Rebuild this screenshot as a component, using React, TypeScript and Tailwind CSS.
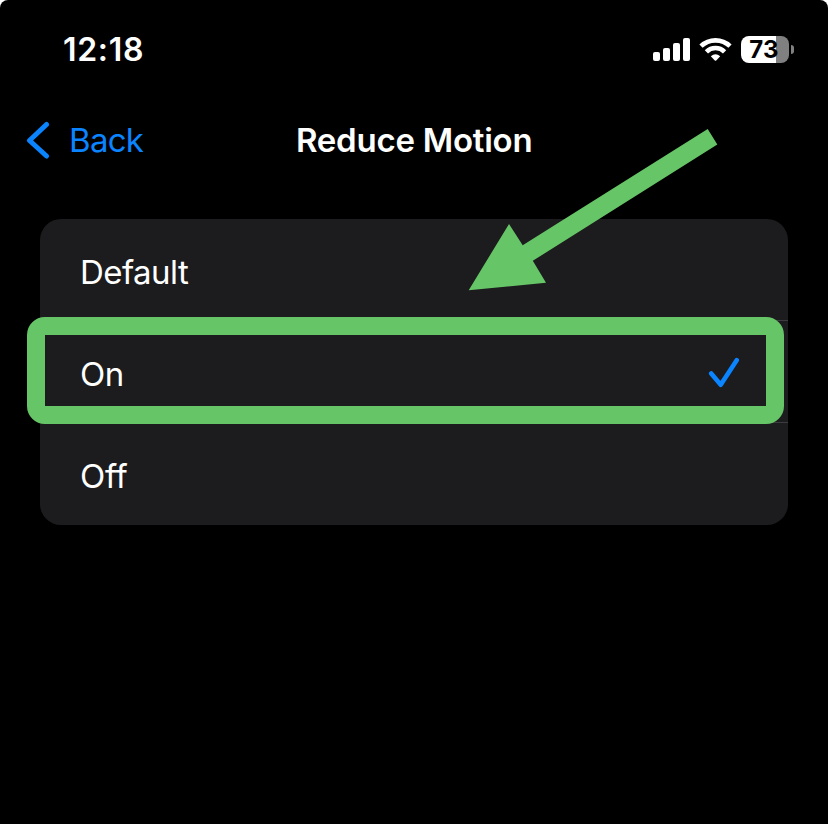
const options = [
  { label: "Default", selected: false, tracking: "tracking-[-0.55px]" },
  { label: "On", selected: true, tracking: "tracking-[-0.4px]" },
  { label: "Off", selected: false, tracking: "tracking-[-0.3px]" },
];

function SignalIcon() {
  return (
    <svg width="37" height="24" viewBox="0 0 37 24" fill="white" className="ml-[653px] shrink-0">
      <rect x="0" y="14" width="7" height="9" rx="2" />
      <rect x="10" y="10" width="7" height="13" rx="2" />
      <rect x="20" y="5" width="7" height="18" rx="2" />
      <rect x="30" y="0" width="7" height="23" rx="2" />
    </svg>
  );
}

function WifiIcon() {
  return (
    <svg width="33" height="24" viewBox="0 0 33 24" fill="none" className="ml-[9px] shrink-0">
      <path d="M2 8.2C10 .4 23 .4 31 8.2" stroke="white" strokeWidth="4.6" />
      <path d="M7.4 13.8C12.4 8.8 20.6 8.8 25.6 13.8" stroke="white" strokeWidth="4.6" />
      <path d="M11.8 18.3Q16.5 14.2 21.2 18.3L17.2 22.5Q16.5 23.2 15.8 22.5Z" fill="white" />
    </svg>
  );
}

function Battery() {
  return (
    <div className="mb-[2px] ml-[9px] flex items-center gap-[2px]">
      <div className="flex h-[27px] w-[48px] items-center justify-center rounded-[8px] bg-[linear-gradient(to_right,#fff_73%,#808080_73%)] pt-px pr-[2px] text-[24px] leading-none font-bold tracking-[0.1px] text-black">
        73
      </div>
      <div className="h-[9px] w-[3px] rounded-r-full bg-[#808080]" />
    </div>
  );
}

export default function App() {
  return (
    <div className="h-[824px] w-[828px] bg-white">
      <div className="relative h-full overflow-hidden rounded-t-[8px] bg-black font-[Inter,sans-serif] text-white">
        <header className="grid h-[100px] items-center">
          <div className="col-start-1 row-start-1 pl-[63px] text-[32px] leading-10 font-semibold tracking-[0.7px]">
            12:18
          </div>
          <div className="col-start-1 row-start-1 flex items-center">
            <SignalIcon />
            <WifiIcon />
            <Battery />
          </div>
        </header>

        <nav className="grid h-[80px] grid-cols-[296px_1fr] items-center">
          <div className="flex items-center pl-[26px] text-[#0a84ff]">
            <svg width="24" height="38" viewBox="0 0 24 38" fill="none" stroke="currentColor" strokeWidth="5" strokeLinecap="round" strokeLinejoin="round">
              <path d="M20.5 3.5 3.5 19.5l17 15.5" />
            </svg>
            <span className="ml-[19px] text-[33px] leading-10 tracking-[-0.7px]">Back</span>
          </div>
          <h1 className="text-[33px] leading-10 font-semibold tracking-[-0.25px] whitespace-nowrap">Reduce Motion</h1>
        </nav>

        <ul className="mx-10 mt-[39px] h-[306px] overflow-hidden rounded-[21px] bg-[#1c1c1e]">
          {options.map((option, i) => (
            <li key={option.label} className="h-[102px] pl-10">
              <div className={`flex h-full items-center justify-between border-b pt-[5px] pr-[48px] ${i < 2 ? "border-[#3d3d41]" : "border-transparent"}`}>
                <span className={`text-[33px] leading-10 ${option.tracking}`}>{option.label}</span>
                {option.selected && (
                  <svg width="32" height="32" viewBox="0 0 32 32" fill="none" stroke="#0a84ff" strokeWidth="4.6" strokeLinecap="round" strokeLinejoin="round" className="mb-[5px]">
                    <path d="M3.2 17.5 12.7 28.7 28.7 4.2" />
                  </svg>
                )}
              </div>
            </li>
          ))}
        </ul>

        <div className="absolute top-[316.5px] left-[27px] h-[107px] w-[757px] rounded-[18px] border-[18px] border-[#66c667]" />
        <svg className="absolute top-[120px] left-[460px]" width="270" height="180" viewBox="0 0 270 180" fill="#66c667">
          <path d="M247.7 9 257.3 24.5 72.8 140.8 86 162.7 8.7 170.2 49 104 62.7 125.3Z" />
        </svg>
      </div>
    </div>
  );
}
